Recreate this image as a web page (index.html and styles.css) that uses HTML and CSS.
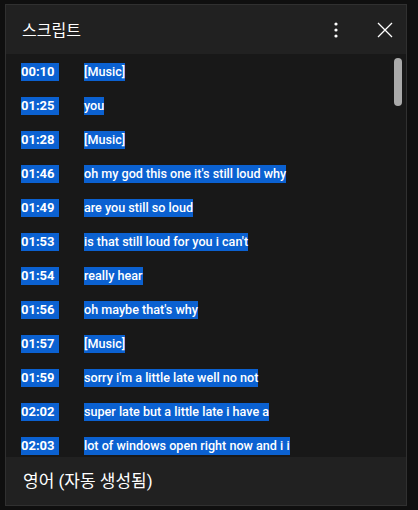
FILE: index.html
```html
<!DOCTYPE html>
<html lang="ko">
<head>
<meta charset="utf-8">
<link rel="stylesheet" href="styles.css">
</head>
<body>
<div class="panel">
  <div class="header">
    <div class="title">스크립트</div>
    <div class="actions">
      <svg class="kebab" width="24" height="24" viewBox="0 0 24 24"><circle cx="12" cy="6" r="1.6" fill="#fff"/><circle cx="12" cy="12" r="1.6" fill="#fff"/><circle cx="12" cy="18" r="1.6" fill="#fff"/></svg>
      <svg class="close" width="24" height="24" viewBox="0 0 24 24"><path d="M5 5 L19 19 M19 5 L5 19" stroke="#fff" stroke-width="1.3" fill="none"/></svg>
    </div>
  </div>
  <div class="body">
    <div class="rows">
      <div class="row"><span class="ts">00:10 </span><span class="tx">[Music]</span></div>
      <div class="row"><span class="ts">01:25 </span><span class="tx">you</span></div>
      <div class="row"><span class="ts">01:28 </span><span class="tx">[Music]</span></div>
      <div class="row"><span class="ts">01:46 </span><span class="tx">oh my god this one it's still loud why</span></div>
      <div class="row"><span class="ts">01:49 </span><span class="tx">are you still so loud</span></div>
      <div class="row"><span class="ts">01:53 </span><span class="tx">is that still loud for you i can't</span></div>
      <div class="row"><span class="ts">01:54 </span><span class="tx">really hear</span></div>
      <div class="row"><span class="ts">01:56 </span><span class="tx">oh maybe that's why</span></div>
      <div class="row"><span class="ts">01:57 </span><span class="tx">[Music]</span></div>
      <div class="row"><span class="ts">01:59 </span><span class="tx">sorry i'm a little late well no not</span></div>
      <div class="row"><span class="ts">02:02 </span><span class="tx">super late but a little late i have a</span></div>
      <div class="row"><span class="ts">02:03 </span><span class="tx">lot of windows open right now and i i</span></div>
      <div class="row"><span class="ts">02:05 </span><span class="tx">don't know</span></div>
    </div>
    <div class="thumb"></div>
  </div>
  <div class="footer"><span class="lang">영어 (자동 생성됨)</span></div>
</div>
</body>
</html>
```
FILE: styles.css
```css
html, body {
  margin: 0;
  padding: 0;
  background: #0f0f0f;
  width: 418px;
  height: 510px;
  overflow: hidden;
}
.panel {
  margin: 4px 0 0 5px;
  width: 400px;
  height: 500px;
  border: 1px solid #303030;
  background: #181818;
  display: flex;
  flex-direction: column;
  font-family: Roboto, "Noto Sans CJK KR", sans-serif;
  color: #fff;
}
.header {
  height: 49px;
  flex: none;
  background: #212121;
  display: flex;
  align-items: center;
  padding: 0 0 0 16px;
}
.title {
  font-family: "Noto Sans CJK KR", sans-serif;
  font-size: 16px;
  font-weight: 400;
  flex: 1;
  position: relative;
  top: -1px;
}
.actions {
  display: flex;
  align-items: center;
  gap: 25px;
  padding-right: 9px;
}
.kebab { display: block; }
.close { display: block; }
.body {
  flex: 1;
  position: relative;
  overflow: hidden;
}
.rows {
  padding: 9px 0 0 15px;
  display: flex;
  flex-direction: column;
  gap: 16px;
}
.row {
  display: flex;
  height: 18px;
  font-size: 12.6px;
  line-height: 18px;
}
.ts, .tx {
  white-space: pre;
}
.ts {
  width: 63px;
  flex: none;
  font-size: 13px;
  font-weight: 700;
  background: linear-gradient(#0b61d1, #0b61d1) no-repeat 0 0 / 38px 18px;
}
.tx {
  font-weight: 500;
  background: #0b61d1;
}
.thumb {
  position: absolute;
  right: 4px;
  top: 4px;
  width: 8px;
  height: 48px;
  border-radius: 4px;
  background: #aaaaaa;
}
.footer {
  height: 48px;
  flex: none;
  background: #212121;
  display: flex;
  align-items: center;
  padding-left: 17px;
  box-sizing: border-box;
}
.lang {
  font-family: Roboto, "Noto Sans CJK KR", sans-serif;
  font-size: 17px;
  line-height: 24px;
}
```
